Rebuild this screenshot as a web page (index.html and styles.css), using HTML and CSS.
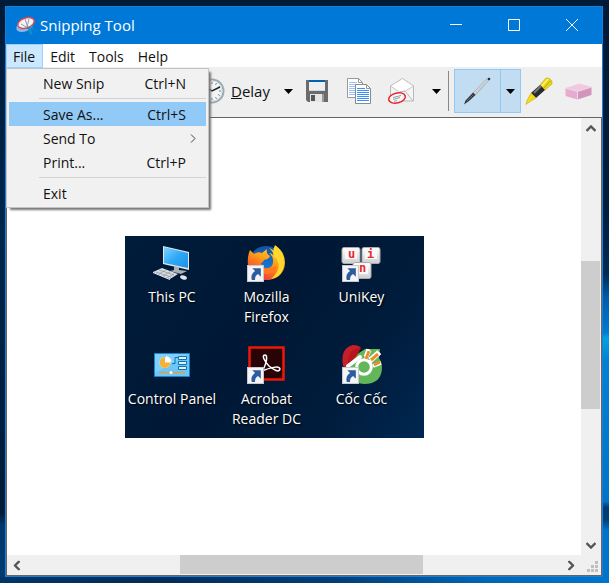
FILE: index.html
```html
<!DOCTYPE html>
<html lang="en">
<head>
<meta charset="utf-8">
<meta name="viewport" content="width=device-width, initial-scale=1">
<title>Snipping Tool</title>
<link rel="stylesheet" href="styles.css">
</head>
<body>
<svg class="defs" aria-hidden="true">
  <defs>
    <linearGradient id="screen" x1="0" y1="0" x2="1" y2="1"><stop offset="0" stop-color="#7fd4ff"/><stop offset=".5" stop-color="#2fa9f7"/><stop offset="1" stop-color="#1c8fe6"/></linearGradient>
    <linearGradient id="fox" x1=".8" y1="0" x2=".2" y2="1"><stop offset="0" stop-color="#ffe226"/><stop offset=".45" stop-color="#ff9a16"/><stop offset="1" stop-color="#f0243c"/></linearGradient>
    <linearGradient id="globe" x1="0" y1="0" x2="0" y2="1"><stop offset="0" stop-color="#164fa5"/><stop offset="1" stop-color="#1590ec"/></linearGradient>
    <linearGradient id="key" x1="0" y1="0" x2="0" y2="1"><stop offset="0" stop-color="#fff"/><stop offset="1" stop-color="#cfcfd2"/></linearGradient>
    <linearGradient id="penBody" x1="0" y1="0" x2="1" y2="1"><stop offset="0" stop-color="#fff"/><stop offset="1" stop-color="#9aa3aa"/></linearGradient>
    <symbol id="shortcut" viewBox="0 0 16 16"><path fill="#f5f5f8" stroke="#c7c9ce" d="M.5.5h15v15H.5z"/><path fill="#2c5b9e" d="M5 3h8v8l-2.600-2.600C8 10 7.400 11.500 7.600 14H4.500C3.400 10 5 7.400 7.600 5.600z"/></symbol>
    <symbol id="caret" viewBox="0 0 9 5"><path d="M0 0h9L4.500 5z"/></symbol>
    <symbol id="chevron" viewBox="0 0 10 7"><path fill="none" stroke="#555" stroke-width="2.400" d="m.5 6 4.500-4.500L9.500 6"/></symbol>
  </defs>
</svg>
<main class="window">
  <header class="titlebar">
    <svg class="app-icon" viewBox="0 0 20 18" aria-hidden="true"><ellipse cx="8.500" cy="9.500" rx="8.500" ry="5" fill="#8eb5e6" transform="rotate(-18 8.500 9.500)"/><ellipse cx="10" cy="6" rx="8.500" ry="5" fill="#f3f4f6" stroke="#d84754" stroke-width="1.400" transform="rotate(-18 10 6)"/><path stroke="#7d8790" stroke-width=".8" fill="none" d="m9 2 3 9m1-9-2 8M5 7l7 4"/><path stroke="#168fc8" stroke-width="1.400" fill="none" d="M11 11c2 0 4-1 7 1m-6-1c2 2 1 5 3 6 2-1 0-4-3-6"/></svg>
    <h1 class="title">Snipping Tool</h1>
    <div class="window-controls">
      <button class="control" aria-label="Minimize"><svg viewBox="0 0 12 12"><path d="M0 5.500h12"/></svg></button>
      <button class="control" aria-label="Maximize"><svg viewBox="0 0 12 12"><path d="M.5.500h11v11H.5z"/></svg></button>
      <button class="control" aria-label="Close"><svg viewBox="0 0 12 12"><path d="m0 0 12 12M12 0 0 12"/></svg></button>
    </div>
  </header>
  <nav class="menubar">
    <div class="menu-holder">
      <button class="menu-button is-open" aria-haspopup="true" aria-expanded="true">File</button>
      <div class="menu" role="menu">
        <button class="menu-item" role="menuitem"><span>New Snip</span><span>Ctrl+N</span></button>
        <hr class="menu-line">
        <button class="menu-item is-active" role="menuitem"><span>Save As...</span><span>Ctrl+S</span></button>
        <button class="menu-item has-submenu" role="menuitem"><span>Send To</span><svg viewBox="0 0 6 9" aria-hidden="true"><path d="m1 .5 4 4-4 4"/></svg></button>
        <button class="menu-item" role="menuitem"><span>Print...</span><span>Ctrl+P</span></button>
        <hr class="menu-line">
        <button class="menu-item" role="menuitem"><span>Exit</span></button>
      </div>
    </div>
    <button class="menu-button">Edit</button>
    <button class="menu-button">Tools</button>
    <button class="menu-button">Help</button>
  </nav>
  <div class="toolbar">
    <button class="tool delay">
      <svg class="clock" viewBox="0 0 26 26" aria-hidden="true"><circle cx="13" cy="13" r="11.500" fill="#f5f7f7" stroke="#9aabb5" stroke-width="2"/><circle cx="13" cy="13" r="10" fill="none" stroke="#d5e0e6"/><path stroke="#707b82" d="M13 4v2m0 14v2M4 13h2m14 0h2M17.500 5.200l-1 1.700M20.800 8.500l-1.700 1M20.800 17.500l-1.700-1M17.500 20.800l-1-1.700M5.200 8.500l1.700 1M8.500 5.200l1 1.700M5.200 17.500l1.700-1M8.500 20.800l1-1.700"/><path fill="none" stroke="#222" stroke-width="1.500" d="m7 9 6 4 8-4"/></svg>
      <span><u>D</u>elay</span>
    </button>
    <button class="tool drop" aria-label="Delay options"><svg><use href="#caret"/></svg></button>
    <button class="tool wide" aria-label="Save Snip">
      <svg class="disk" viewBox="0 0 22 22"><path fill="#6b6b6b" d="M0 0h22v22H2l-2-2z"/><path fill="#0063b1" d="M3 0h16v2H3z"/><path fill="#eee" d="M3 2h16v9H3z"/><path fill="#d8d8d8" d="M3 10h16v1H3z"/><path fill="#e5e5e5" d="M4 14h14v8H4z"/><path fill="#555" d="M5 15h4v6H5z"/><path fill="#999" d="M16 14h2v8h-2z"/></svg>
    </button>
    <button class="tool wide" aria-label="Copy">
      <svg class="copy" viewBox="0 0 24 26"><path fill="#fff" stroke="#999" d="M.5.500h11l4 4v15H.5z"/><path fill="none" stroke="#999" d="M11.500.500v4h4"/><path stroke="#9cc2f7" d="M2 4.500h8M2 6.500h8M2 8.500h11M2 10.500h11M2 12.500h11M2 14.500h11M2 16.500h11"/><path fill="#fff" stroke="#858b90" d="M8.500 6.500h11l4 4v15h-15z"/><path fill="none" stroke="#999" d="M19.500 6.500v4h4"/><path stroke="#3d8eff" d="M10 10.500h8M10 12.500h12M10 14.500h12M10 16.500h12M10 18.500h12M10 20.500h12M10 22.500h12"/></svg>
    </button>
    <button class="tool wide" aria-label="Send Snip">
      <svg class="mail" viewBox="0 0 26 26"><path fill="#f5f5f5" stroke="#b9b9b9" d="m2.500 8 12-7.500 11 7.500v15h-23z"/><path fill="#fff" stroke="#c8c8c8" d="m2.500 8 9 6 6-1 8-5-11-7.500z"/><path fill="none" stroke="#bbb" d="m3 23 9-9 5-1 8 10"/><ellipse cx="9" cy="20" rx="8.500" ry="5" fill="#fafafa" stroke="#e8262c" stroke-width="1.500" transform="rotate(-14 9 20)"/><path stroke="#999" d="m5 19.500 8-2M5 21.500l7-2M6 23.500l3-1"/></svg>
    </button>
    <button class="tool drop" aria-label="Send options"><svg><use href="#caret"/></svg></button>
    <span class="divider"></span>
    <div class="split">
      <button class="tool pen-button" aria-label="Pen">
        <svg class="pen" viewBox="0 0 28 28"><path fill="url(#penBody)" stroke="#8b959b" stroke-width=".5" d="m10 16 13-13.500 2.500-1.300L26 3 12.500 18z"/><path fill="#33373b" d="m10 15.500 2.500 2.500L6 24l-5 3.500 1.500-4z"/><path stroke="#85898d" stroke-width=".7" d="m4 24 6-6"/><circle cx="26" cy="2" r="1.300" fill="#263139"/></svg>
      </button>
      <button class="tool pen-drop" aria-label="Pen options"><svg><use href="#caret"/></svg></button>
    </div>
    <button class="tool marker-button" aria-label="Highlighter">
      <svg class="marker" viewBox="0 0 28 28"><path fill="#ead514" stroke="#a99909" stroke-width=".5" d="m15 8 6-7q3-1 6 3v3l-7 6z"/><path stroke="#fff27c" stroke-width="1.500" d="m17 9 6-7"/><path stroke="#b9a60b" d="m19 11 6-7"/><path fill="#282a2b" d="m15 8 5 5-9 8-5-5z"/><path stroke="#777" stroke-width="2" d="m9 16 7-7"/><path fill="#f2dc18" stroke="#b5a20a" stroke-width=".5" d="m6 16 5 5-5 3-5 3.500 1-4z"/></svg>
    </button>
    <button class="tool eraser-button" aria-label="Eraser">
      <svg class="eraser" viewBox="0 0 27 17"><path fill="#efc9df" d="m.5 5 14-4.500 12 3.500-14 4.500z"/><path fill="#e4adcd" d="M.5 5l12 3.500v8L.5 13z"/><path fill="#d396bb" d="m12.500 8.500 14-4.500v8l-14 4.500z"/><path fill="none" stroke="#f3d6e6" d="m.5 5 12 3.500v8m0-8 14-4.500"/></svg>
    </button>
  </div>
  <section class="viewer">
    <div class="canvas">
      <div class="snip">
        <figure class="shortcut">
          <svg viewBox="0 0 40 38" aria-hidden="true"><path fill="#e3e8eb" d="m11 1 26 6v18l-26-6z"/><path fill="url(#screen)" d="m12 2 24 6v15l-24-5z"/><path fill="#aab1b7" d="m22 21 5 1v3l8 1-6 3-11-3 4-1z"/><path fill="#d9dde0" d="m1 27 9-4 16 6-8 5z"/><path stroke="#8d969d" stroke-width=".7" fill="none" d="m4 27 15 5m-12-7 15 5M7 29l7-4m-3 6 7-4m-3 6 7-4"/><path fill="#fff" d="m1 27 17 7v1L1 28z"/><ellipse cx="31.500" cy="32.500" rx="3.500" ry="2" fill="#e3e5e7" transform="rotate(20 31.500 32.500)"/></svg>
          <figcaption>This PC</figcaption>
        </figure>
        <figure class="shortcut">
          <svg viewBox="2 0 40 38" aria-hidden="true"><circle cx="21" cy="18" r="17" fill="url(#globe)"/><path fill="url(#fox)" d="M5 5 9 9q4-3 8-1l5-4q-1 5 3 7-1 3-6 4-1 3-3 3 1 6 7 5 5-1 5-6 1-5-4-9 3 0 5 3-1-5-5-8 4 1 6 5l1-7q9 6 9 17-1 15-17 17Q6 35 3 20 2 12 5 5z"/><path fill="#ffd82e" d="M30 0q9 8 9 18-1 14-13 16 10-9 7-17-1-4-4-5-2-6 1-12z"/><path fill="#ff7a20" d="M16 18q1 8 9 5 4-1 7-2-3 9-11 8-8-2-9-9z"/><use href="#shortcut" x="2" y="20" width="17" height="17"/></svg>
          <figcaption>Mozilla Firefox</figcaption>
        </figure>
        <figure class="shortcut">
          <svg viewBox="1 0 40 38" aria-hidden="true"><g fill="url(#key)" stroke="#aaa"><rect x="1" y="2.500" width="18" height="16" rx="2"/><rect x="21" y="2.500" width="18" height="16" rx="2"/><rect x="12" y="17.500" width="18" height="16" rx="2"/></g><g fill="#f8f8f9"><path d="M4 3h12v11H4zM24 3h12v11H24zM15 18h12v11H15z"/></g><g class="key-letter"><text x="7" y="13">u</text><text x="26" y="13">i</text><text x="18" y="27">n</text></g><use href="#shortcut" x="1" y="20" width="17" height="17"/></svg>
          <figcaption>UniKey</figcaption>
        </figure>
        <figure class="shortcut">
          <svg viewBox="0 0 40 38" aria-hidden="true"><path fill="#69c7fa" stroke="#1685cc" d="M2.500 6.500h35v23h-35z"/><path fill="#91d9ff" d="M3 7h34L3 26z" opacity=".55"/><circle cx="13" cy="15.500" r="5.500" fill="#fff"/><path fill="#f4b237" d="M13 15.500V10a5.500 5.500 0 1 0 5.500 5.500z"/><path fill="#fff" d="M14 14.500V9q5 1 5.500 5.500z"/><path fill="#daf3ff" stroke="#1872a8" d="M26.500 9.500h8v3h-8zM26.500 14.500h8v3h-8zM26.500 19.500h8v3h-8z"/><path fill="none" stroke="#1872a8" d="M20 16.500h3v-6h3"/><path stroke="#ef9c2d" stroke-width="1.500" d="M7 25.500h26"/><circle cx="19" cy="25.500" r="1.500" fill="#fff"/></svg>
          <figcaption>Control Panel</figcaption>
        </figure>
        <figure class="shortcut">
          <svg viewBox="2 0 40 38" aria-hidden="true"><path fill="#290407" stroke="#ed1809" stroke-width="2.500" d="M4.500.500h34v32h-34z"/><path fill="none" stroke="#fff" stroke-width="1.500" d="M20 8c-4 0 0 7 4 11 5 4 10 7 11 3 0-4-11-1-18 2-7 4-6 7-2 3C20 22 24 8 20 8z"/><use href="#shortcut" x="2" y="20" width="17" height="17"/></svg>
          <figcaption>Acrobat Reader DC</figcaption>
        </figure>
        <figure class="shortcut">
          <svg viewBox="1 0 40 38" aria-hidden="true"><path fill="#63b65a" d="M12 10 24 2h15l-1 9q3 4 3 9 0 17-18 17Q7 36 8 21z"/><path fill="none" stroke="#fff" stroke-width="3.500" d="m25 12 2-10m2 13 10-9M32 19l8-3"/><circle cx="23" cy="20" r="7.300" fill="#63b65a" stroke="#fff" stroke-width="3"/><path stroke="#fff" stroke-width="5" d="m25 10 3-7m1 10 9-8"/><path stroke="#f08b2b" stroke-width="3" d="m25 12 3-8m2 9 7-6m-4 11 6-3"/><path fill="#c51f28" d="M2 19Q-1 1 12-2q6 0 8 3l-9 5-6 17z"/><path fill="#b9131e" d="M7 14Q8 1 20 1l-5 9-6 6z"/><path stroke="#fff" stroke-width="4" stroke-linecap="round" d="m7 19 12-9"/><use href="#shortcut" x="1" y="20" width="17" height="17"/></svg>
          <figcaption>Cốc Cốc</figcaption>
        </figure>
      </div>
    </div>
    <div class="scroll vertical">
      <button class="scroll-button" aria-label="Scroll up"><svg><use href="#chevron"/></svg></button>
      <span class="space-before"></span><span class="thumb"></span><span class="space-after"></span>
      <button class="scroll-button" aria-label="Scroll down"><svg class="down"><use href="#chevron"/></svg></button>
    </div>
    <div class="scroll horizontal">
      <button class="scroll-button" aria-label="Scroll left"><svg class="left"><use href="#chevron"/></svg></button>
      <span class="space-before"></span><span class="thumb"></span><span class="space-after"></span>
      <button class="scroll-button" aria-label="Scroll right"><svg class="right"><use href="#chevron"/></svg></button>
    </div>
    <div class="grip"><svg viewBox="0 0 11 11" aria-hidden="true"><path d="M8 0h3v3H8zM8 4h3v3H8zM8 8h3v3H8zM4 4h3v3H4zM4 8h3v3H4zM0 8h3v3H0z"/></svg></div>
  </section>
</main>
</body>
</html>
```
FILE: styles.css
```css
* { box-sizing: border-box; }

body {
  margin: 0;
  height: 100vh;
  padding: 6px 6px 6px 5px;
  display: flex;
  font: 14px/20px "Open Sans", "Noto Sans", sans-serif;
  color: #111;
  background:
    linear-gradient(#001b37 0, #001d3b 35%, #002b57 47%, #005ba8 51%, #007bd3 57%, #00a4df 58%, #0080d5 62%, #0074ca 86%, #003b73 87%, #003e78 89%, #0073ca 91%, #0073ca) right / 6px 100% no-repeat,
    linear-gradient(90deg, #003566, #002c58 25%, #003e78 55%, #0065b5 80%, #0074ca) bottom / 100% 6px no-repeat,
    linear-gradient(#001b37 0, #00264c 40%, #001b37 88%, #003769 90%, #003c72) left / 5px 100% no-repeat,
    #001c39;
}

button {
  margin: 0;
  padding: 0;
  border: 0;
  background: none;
  font: inherit;
  color: inherit;
}

svg { display: block; overflow: visible; }
.defs { position: absolute; width: 0; height: 0; }

.window {
  flex: 1;
  min-width: 0;
  display: flex;
  flex-direction: column;
  border: 1px solid #1c7fd6;
  background: #fff;
}

.titlebar {
  flex: none;
  height: 37px;
  display: flex;
  align-items: center;
  padding-left: 10px;
  gap: 4px;
  background: #0078d7;
  color: #fff;
}
.app-icon { width: 20px; height: 18px; }
.title { margin: 0; padding-bottom: 2px; font-size: 15px; font-weight: 400; }
.window-controls { margin-left: auto; padding-right: 1px; display: flex; align-self: stretch; }
.control { width: 58px; padding-bottom: 1px; display: grid; place-items: center; }
.control svg { width: 12px; height: 12px; fill: none; stroke: #fff; }

.menubar { flex: none; display: flex; height: 23px; }
.menu-holder { position: relative; display: flex; }
.menu-button { height: 24px; padding: 2px 7px 0; }
.menu-button.is-open { padding-right: 8px; background: #cce8ff; box-shadow: inset 0 0 0 1px #99d1ff; }

.menu {
  position: absolute;
  z-index: 2;
  top: 24px;
  left: 0;
  width: 203px;
  padding: 2px;
  border: 1px solid #c4c4c4;
  background: #f1f1f1;
  box-shadow: 3px 3px 2px -1px #777;
}
.menu-item {
  width: 100%;
  height: 24px;
  padding: 1px 20px 0 34px;
  display: flex;
  align-items: center;
  justify-content: space-between;
}
.menu-item.is-active { background: #91c9f7; }
.menu-item.has-submenu { padding-right: 10px; }
.menu-item svg { width: 6px; height: 9px; fill: none; stroke: #444; }
.menu-line { margin: 3px 0 3px 30px; border: 0; border-top: 1px solid #d2d2d2; }

.toolbar {
  flex: none;
  height: 51px;
  display: flex;
  align-items: center;
  padding: 0 0 2px 193px;
  border-bottom: 1px solid #646464;
  background: #efefef;
}
.tool { flex: none; height: 44px; display: grid; place-items: center; }
.tool.delay { display: flex; align-items: center; gap: 6px; font-size: 15px; }
.clock { width: 26px; height: 26px; }
.tool.drop { width: 22px; margin-left: 8px; }
.drop svg, .pen-drop svg { width: 9px; height: 5px; }
.tool.wide { width: 34px; margin-right: 8px; }
.disk { width: 22px; height: 22px; }
.copy { width: 24px; height: 26px; }
.mail { width: 26px; height: 26px; }
.divider { flex: none; width: 1px; height: 40px; background: #888; }
.toolbar .wide + .drop { margin-left: 0; }
.split { flex: none; display: flex; margin-left: 5px; border: 1px solid #90c8f6; background: #c2dcf2; }
.split .tool { height: 42px; }
.tool.pen-button { width: 45px; }
.tool.pen-drop { width: 20px; border-left: 1px solid #90c8f6; }
.pen { width: 28px; height: 28px; }
.tool.marker-button { width: 36px; }
.marker { width: 28px; height: 28px; }
.tool.eraser-button { width: 44px; }
.eraser { width: 27px; height: 17px; }

.viewer {
  flex: 1;
  min-height: 0;
  display: grid;
  grid-template-columns: minmax(0, 1fr) 20px;
  grid-template-rows: minmax(0, 1fr) 20px;
  border: solid #646464;
  border-width: 0 1px 1px;
}
.canvas { padding: 118px; overflow: hidden; }
.snip {
  width: 299px;
  padding: 9px 15px 0 0;
  display: grid;
  grid-template-columns: 94px 95px 95px;
  grid-template-rows: 102px 91px;
  background: linear-gradient(125deg, #001c3b, #001835 45%, #001c3c 75%, #002752);
  color: #fff;
}
.shortcut {
  margin: 0;
  display: flex;
  flex-direction: column;
  align-items: center;
  gap: 4px;
  text-align: center;
  text-shadow: 1px 1px 2px #000;
}
.shortcut svg { width: 40px; height: 38px; }
.key-letter { fill: #e52a31; font: bold 12px/16px "DejaVu Sans Mono", monospace; text-shadow: none; }
.shortcut figcaption { padding: 0 8px; }
.shortcut:nth-child(4) figcaption { padding: 0; white-space: nowrap; }
.shortcut:nth-child(5) figcaption { padding: 0; }

.scroll { display: flex; background: #f0f0f0; }
.vertical { flex-direction: column; }
.scroll-button { flex: 0 0 20px; display: grid; place-items: center; }
.scroll-button svg { width: 10px; height: 7px; }
.scroll-button .down { transform: rotate(180deg); }
.scroll-button .left { transform: rotate(-90deg); }
.scroll-button .right { transform: rotate(90deg); }
.thumb { background: #cdcdcd; }
.vertical .thumb { flex: 148; margin-right: 1px; }
.vertical .space-before { flex: 123; }
.vertical .space-after { flex: 126; }
.horizontal .thumb { flex: 243; margin-bottom: 1px; }
.horizontal .space-before { flex: 153; }
.horizontal .space-after { flex: 138; }
.grip { display: flex; align-items: flex-end; justify-content: flex-end; padding: 3px; background: #f0f0f0; }
.grip svg { width: 11px; height: 11px; fill: #bfbfbf; }
```
